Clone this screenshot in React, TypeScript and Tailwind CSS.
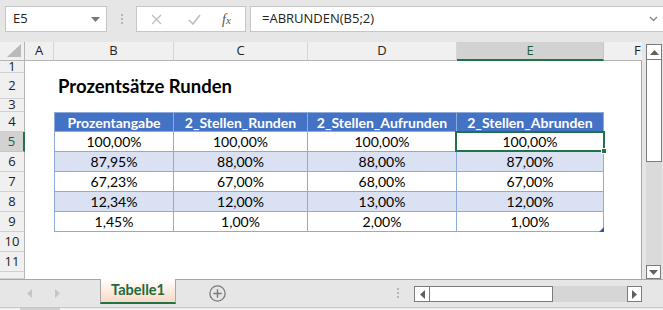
import React from "react";

// Excel-style sheet: formula bar, headers, a formatted table and the sheet tab bar.

const UI_FONT = "font-['Open_Sans','Noto_Sans',sans-serif]";
const CELL_FONT = "font-['Lato','Liberation_Sans',sans-serif]";

const COLS = ["A", "B", "C", "D", "E", "F"];
// height of each sheet row, row 12 is only partly visible
const ROW_HEIGHTS = ["h-[12px]", "h-[26px]", "h-[13px]", "h-[20px]", "h-[20px]", "h-[20px]", "h-[20px]", "h-[20px]", "h-[20px]", "h-[20px]", "h-[20px]", "h-[7px]"];

const HEADERS = ["Prozentangabe", "2_Stellen_Runden", "2_Stellen_Aufrunden", "2_Stellen_Abrunden"];
const DATA = [
  ["100,00%", "100,00%", "100,00%", "100,00%"],
  ["87,95%", "88,00%", "88,00%", "87,00%"],
  ["67,23%", "67,00%", "68,00%", "67,00%"],
  ["12,34%", "12,00%", "13,00%", "12,00%"],
  ["1,45%", "1,00%", "2,00%", "1,00%"],
];

function FormulaBar() {
  return (
    <div className={`flex h-[42px] items-start pt-[6px] ${UI_FONT}`}>
      <div className="ml-[5px] flex h-[26px] w-[102px] items-center justify-between border border-[#c6c6c6] bg-white pl-[7px] pr-[6px] text-[13px] text-[#222]">
        <span>E5</span>
        <svg width="9" height="5" viewBox="0 0 9 5">
          <polygon points="0,0 9,0 4.5,5" fill="#777" />
        </svg>
      </div>
      <div className="ml-[14px] mt-[8px] flex flex-col gap-[2px]">
        <span className="h-[2px] w-[2px] bg-[#b4b4b4]" />
        <span className="h-[2px] w-[2px] bg-[#b4b4b4]" />
        <span className="h-[2px] w-[2px] bg-[#b4b4b4]" />
      </div>
      <div className="ml-[13px] flex h-[26px] w-[110px] items-center border border-[#c6c6c6] bg-white">
        <svg className="ml-[14px]" width="11" height="11" viewBox="0 0 11 11">
          <path d="M1 1 L10 10 M10 1 L1 10" stroke="#bdbdbd" strokeWidth="1.3" />
        </svg>
        <svg className="ml-[26px]" width="13" height="11" viewBox="0 0 13 11">
          <path d="M1 6 L5 10 L12 1" stroke="#bdbdbd" strokeWidth="1.6" fill="none" />
        </svg>
        <span className="ml-[21px] font-['Liberation_Serif',serif] text-[14px] italic text-[#555]">
          f<span className="text-[11px]">x</span>
        </span>
      </div>
      <div className="ml-[4px] flex h-[26px] flex-1 items-center justify-between border border-[#c6c6c6] border-r-0 bg-white pl-[11px] pr-[5px] text-[13px] text-[#222]">
        <span>=ABRUNDEN(B5;2)</span>
        <svg width="9" height="6" viewBox="0 0 9 6">
          <path d="M1 1 L4.5 4.5 L8 1" stroke="#8a8a8a" strokeWidth="1.4" fill="none" />
        </svg>
      </div>
    </div>
  );
}

function ColumnHeaders() {
  return (
    <div className={`flex h-[19px] ${UI_FONT} text-[13px] text-[#222]`}>
      <div className="relative w-[25px] border-r border-b border-[#b5b5b5] bg-[#f0f0f0]">
        <svg className="absolute bottom-[3px] right-[3px]" width="14" height="13" viewBox="0 0 14 13">
          <polygon points="14,0 14,13 0,13" fill="#b9b9b9" />
        </svg>
      </div>
      {COLS.map((c) => {
        const width =
          c === "A" ? "w-[29px]" : c === "B" ? "w-[120px]" : c === "C" ? "w-[134px]" : c === "D" ? "w-[149px]" : c === "E" ? "w-[147px]" : "w-[38px]";
        if (c === "E") {
          return (
            <div key={c} className={`${width} flex items-center justify-center border-r border-b-2 border-r-[#c6c6c6] border-b-[#217346] bg-[#d2d2d2] text-[#1e5e3b]`}>
              {c}
            </div>
          );
        }
        if (c === "F") {
          return (
            <div key={c} className={`${width} flex items-center border-b border-[#b5b5b5] bg-[#f0f0f0] pl-[30px]`}>
              {c}
            </div>
          );
        }
        return (
          <div key={c} className={`${width} flex items-center justify-center border-r border-b border-r-[#d6d6d6] border-b-[#b5b5b5] bg-[#f0f0f0]`}>
            {c}
          </div>
        );
      })}
    </div>
  );
}

function TableCell({ row, col }: { row: number; col: number }) {
  // row: sheet row number 4..9, col: 0..3 for columns B..E
  const header = row === 4;
  const banded = row === 6 || row === 8;
  const bg = header ? "bg-[#4472c4] text-white font-bold" : banded ? "bg-[#d9e1f2] text-black" : "bg-white text-black";
  const borders = `border-r border-b border-[#8eaadb] ${col === 0 ? "border-l" : ""} ${header ? "border-t" : ""}`;
  const selected = row === 5 && col === 3;
  const text = header ? HEADERS[col] : DATA[row - 5][col];
  return (
    <div className={`relative flex h-full items-center justify-center ${bg} ${borders} ${CELL_FONT} text-[14px]`}>
      {text}
      {selected && (
        <div className="absolute -top-[1px] -left-[2px] -right-[2px] -bottom-[1px] z-10 border-2 border-[#217346]">
          <div className="absolute -right-[4px] -bottom-[4px] h-[6px] w-[6px] border border-white bg-[#217346]" />
        </div>
      )}
      {row === 9 && col === 3 && (
        <svg className="absolute -bottom-[1px] -right-[1px]" width="5" height="5" viewBox="0 0 5 5">
          <polygon points="5,0 5,5 0,5" fill="#2f55a6" />
        </svg>
      )}
    </div>
  );
}

function SheetRow({ index }: { index: number }) {
  const rowNo = index + 1;
  const active = rowNo === 5;
  return (
    <div className={`flex ${ROW_HEIGHTS[index]}`}>
      <div
        className={`flex w-[25px] items-center justify-center overflow-hidden border-b border-r ${UI_FONT} text-[13px] ${
          active ? "border-b-[#c6c6c6] border-r-2 border-r-[#217346] bg-[#d2d2d2] text-[#1e5e3b]" : "border-b-[#d0d0d0] border-r-[#b5b5b5] bg-[#f0f0f0] text-[#222]"
        }`}
      >
        {rowNo <= 11 ? rowNo : ""}
      </div>
      <div className="w-[29px] bg-white" />
      {rowNo === 2 ? (
        <div className={`flex w-[450px] items-end bg-white pb-[1px] pl-[4px] ${CELL_FONT} text-[18.5px] font-bold leading-[24px] text-black`}>
          Prozentsätze Runden
        </div>
      ) : rowNo >= 4 && rowNo <= 9 ? (
        <>
          <div className="w-[120px]"><TableCell row={rowNo} col={0} /></div>
          <div className="w-[134px]"><TableCell row={rowNo} col={1} /></div>
          <div className="w-[149px]"><TableCell row={rowNo} col={2} /></div>
          <div className="w-[147px]"><TableCell row={rowNo} col={3} /></div>
        </>
      ) : (
        <div className="w-[550px] bg-white" />
      )}
      {rowNo === 2 && <div className="w-[100px] bg-white" />}
      <div className="w-[38px] border-r border-[#a6a6a6] bg-white" />
    </div>
  );
}

function VerticalScrollbar() {
  return (
    <div className="flex w-[21px] flex-col pl-[4px] pt-[2px]">
      <div className="flex h-[16px] w-[16px] items-center justify-center border border-[#7b7b7b] bg-white">
        <svg width="9" height="5" viewBox="0 0 9 5"><polygon points="0,5 9,5 4.5,0" fill="#606060" /></svg>
      </div>
      <div className="h-[102px] w-[16px] border border-t-0 border-[#7b7b7b] bg-white" />
      <div className="w-[16px] flex-1 bg-[#dadada]" />
      <div className="flex h-[14px] w-[15px] items-center justify-center border border-[#7b7b7b] bg-white">
        <svg width="9" height="5" viewBox="0 0 9 5"><polygon points="0,0 9,0 4.5,5" fill="#606060" /></svg>
      </div>
    </div>
  );
}

function TabBar() {
  return (
    <div className="flex h-[28px] items-start border-t border-[#a6a6a6] bg-[#e6e6e6]">
      <div className="flex h-[26px] w-[100px] items-center">
        <svg className="ml-[27px]" width="5" height="9" viewBox="0 0 5 9"><polygon points="5,0 5,9 0,4.5" fill="#c6c6c6" /></svg>
        <svg className="ml-[23px]" width="5" height="9" viewBox="0 0 5 9"><polygon points="0,0 0,9 5,4.5" fill="#c6c6c6" /></svg>
      </div>
      <div className="-mt-[1px] flex h-[25px] w-[76px] items-center justify-center border-x border-b-2 border-x-[#a6a6a6] border-b-[#217346] bg-gradient-to-b from-white to-[#f8d9c4] pb-[1px] font-['Lato',sans-serif] text-[14.5px] font-bold text-[#1e6b41]">
        Tabelle1
      </div>
      <div className="ml-[33px] mt-[5px]">
        <svg width="17" height="17" viewBox="0 0 17 17">
          <circle cx="8.5" cy="8.5" r="7.6" stroke="#7a7a7a" strokeWidth="1.3" fill="none" />
          <path d="M8.5 4.3 V12.7 M4.3 8.5 H12.7" stroke="#7a7a7a" strokeWidth="1.4" />
        </svg>
      </div>
      <div className="ml-[171px] mt-[8px] flex flex-col gap-[2px]">
        <span className="h-[2px] w-[2px] bg-[#b4b4b4]" />
        <span className="h-[2px] w-[2px] bg-[#b4b4b4]" />
        <span className="h-[2px] w-[2px] bg-[#b4b4b4]" />
      </div>
      <div className="ml-[15px] mt-[6px] flex h-[16px] w-[228px]">
        <div className="flex w-[16px] items-center justify-center border border-[#7b7b7b] bg-white">
          <svg width="5" height="9" viewBox="0 0 5 9"><polygon points="5,0 5,9 0,4.5" fill="#606060" /></svg>
        </div>
        <div className="w-[123px] border border-l-0 border-[#7b7b7b] bg-white" />
        <div className="flex-1 bg-[#d6d6d6]" />
        <div className="flex w-[15px] items-center justify-center border border-[#7b7b7b] bg-white">
          <svg width="5" height="9" viewBox="0 0 5 9"><polygon points="0,0 0,9 5,4.5" fill="#606060" /></svg>
        </div>
      </div>
    </div>
  );
}

export default function App() {
  return (
    <div className="flex h-[310px] w-[663px] flex-col overflow-hidden bg-[#e6e6e6]">
      <FormulaBar />
      <div className="flex">
        <div className="flex w-[642px] flex-col">
          <ColumnHeaders />
          {ROW_HEIGHTS.map((_, i) => (
            <SheetRow key={i} index={i} />
          ))}
        </div>
        <VerticalScrollbar />
      </div>
      <TabBar />
      <div className="flex h-[3px] border-t border-[#c6c6c6] bg-[#f0f0f0]">
        <div className="ml-[20px] w-[40px] bg-[#cfcfcf]" />
      </div>
    </div>
  );
}
